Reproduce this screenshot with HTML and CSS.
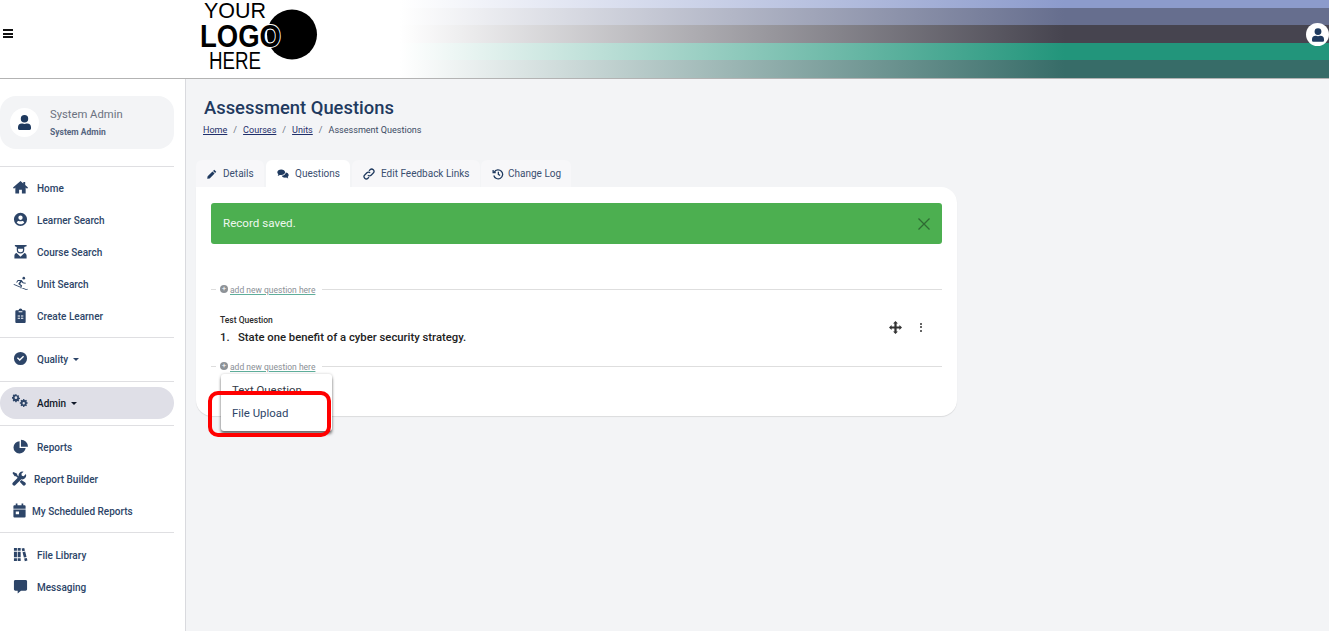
FILE: index.html
```html
<!DOCTYPE html>
<html lang="en">
<head>
<meta charset="utf-8">
<title>Assessment Questions</title>
<link rel="stylesheet" href="styles.css">
</head>
<body>
<header class="topbar">
  <div class="burger"><span></span><span></span><span></span></div>
  <svg class="logo" width="122" height="72" viewBox="0 0 122 72">
    <circle cx="93" cy="33.500" r="25" fill="#000"/>
    <text class="logo-thin" x="5" y="17" textLength="62" lengthAdjust="spacingAndGlyphs" font-size="22">YOUR</text>
    <text class="logo-bold" x="1" y="46" textLength="81" lengthAdjust="spacingAndGlyphs" font-size="32">LOGO</text>
    <text class="logo-thin" x="10" y="68" textLength="52" lengthAdjust="spacingAndGlyphs" font-size="23">HERE</text>
  </svg>
  <div class="stripes">
    <div class="stripe s1"></div>
    <div class="stripe s2"></div>
    <div class="stripe s3"></div>
    <div class="stripe s4"></div>
    <div class="stripe s5"></div>
  </div>
  <div class="top-user">
    <svg width="12" height="14" viewBox="0 0 448 512"><path fill="#1f3a5f" d="M224 256a128 128 0 1 0 0-256 128 128 0 0 0 0 256zm90 32h-17a174 174 0 0 1-146 0h-17A134 134 0 0 0 0 422v42a48 48 0 0 0 48 48h352a48 48 0 0 0 48-48v-42a134 134 0 0 0-134-134z"/></svg>
  </div>
</header>

<div class="page">
  <aside class="sidebar">
    <div class="user-card">
      <div class="avatar">
        <svg width="13" height="15" viewBox="0 0 448 512"><path fill="#1f3a5f" d="M224 256a128 128 0 1 0 0-256 128 128 0 0 0 0 256zm90 32h-17a174 174 0 0 1-146 0h-17A134 134 0 0 0 0 422v42a48 48 0 0 0 48 48h352a48 48 0 0 0 48-48v-42a134 134 0 0 0-134-134z"/></svg>
      </div>
      <div>
        <div class="user-name">System Admin</div>
        <div class="user-role">System Admin</div>
      </div>
    </div>

    <nav class="nav-group first">
      <a class="nav-item"><svg class="ico" viewBox="0 0 16 16"><path d="M8 1 0 8l1 1.200L2.500 8v6.500h4v-4h3v4h4V8L15 9.200 16 8l-3-2.600V2h-2v1.700z"/></svg>Home</a>
      <a class="nav-item"><svg class="ico" viewBox="0 0 16 16"><path fill-rule="evenodd" d="M8 .8a7 7 0 1 0 0 14 7 7 0 0 0 0-14zm0 3a2.300 2.300 0 1 1 0 4.600 2.300 2.300 0 0 1 0-4.600zm0 9.300c-1.700 0-3.200-.8-4-2 .4-1 1.300-1.600 2.200-1.600.6.200 1.200.4 1.800.4s1.200-.2 1.800-.4c.9 0 1.800.6 2.200 1.600-.8 1.200-2.300 2-4 2z"/></svg>Learner Search</a>
      <a class="nav-item"><svg class="ico" viewBox="0 0 16 16"><path fill-rule="evenodd" d="M2 1h12.500v1.300L12 3.300v2.700a4 4 0 0 1-8 0V3.200L2 2.400zM5.300 5v1a2.700 2.700 0 0 0 5.400 0V5zM3.800 9.600 8 13.500l4.200-3.900c1.300.3 2.300 1.500 2.300 3V15.500h-13v-2.900c0-1.500 1-2.700 2.300-3z"/></svg>Course Search</a>
      <a class="nav-item"><svg class="ico" viewBox="0 0 16 16"><circle cx="11.500" cy="2.300" r="1.400"/><path d="M5 4.200h4.200l2 2.600 2.400.5-.2 1-3-.6-1.300-1.300-1.500 2 2.100 1.800-1 3-1-.3.600-2.300-2.700-2 2-3.300H5.500L4.200 7.300l-.8-.6zM.6 9.300l.4-.9 13.300 5.700c.6.200 1-.1 1.300-.6l.4.300c-.4.900-1.200 1.300-2 1z"/></svg>Unit Search</a>
      <a class="nav-item"><svg class="ico" viewBox="0 0 16 16"><path fill-rule="evenodd" d="M3.500 2.500H6a2 2 0 0 1 4 0h2.500c.6 0 1 .4 1 1V15c0 .6-.4 1-1 1h-9c-.6 0-1-.4-1-1V3.500c0-.6.400-1 1-1zM5 8v1h2.500V8zm3.500 0v1H11V8zM5 10.500v1h2.500v-1zm3.500 0v1H11v-1zM6 3.500v1h4v-1z"/></svg>Create Learner</a>
    </nav>
    <nav class="nav-group quality">
      <a class="nav-item"><svg class="ico" viewBox="0 0 16 16"><path fill-rule="evenodd" d="M8 1a7 7 0 1 0 0 14A7 7 0 0 0 8 1zm3.800 5-4.600 4.600-3-3 1-1 2 2 3.600-3.600z"/></svg>Quality<span class="caret"></span></a>
    </nav>
    <nav class="nav-group admin">
      <a class="nav-item active"><svg class="ico cogs" viewBox="0 0 18 16"><path fill-rule="evenodd" d="M5 1h1.600l.3 1.300 1 .5 1.200-.6 1 1.100-.7 1.100.4 1 1.300.4v1.500l-1.300.3-.4 1 .7 1.100-1.100 1-1.100-.7-1 .4-.3 1.300H5l-.3-1.300-1-.4-1.100.7-1.100-1 .7-1.100-.4-1L.5 6.300V4.800l1.300-.4.4-1L1.500 2.300l1.100-1.100 1.100.6 1-.5zM5.800 3.700a1.800 1.800 0 1 0 0 3.600 1.800 1.800 0 0 0 0-3.600z" transform="translate(-.5 -1) scale(.85)"/><path fill-rule="evenodd" d="M12.300 6.500h1.400l.3 1.200 1 .4 1-.6 1 1-.6 1 .4 1 1.200.3v1.400l-1.200.3-.4 1 .6 1-1 1-1-.6-1 .4-.3 1.200h-1.400l-.3-1.200-1-.4-1 .6-1-1 .6-1-.4-1-1.200-.3v-1.400l1.200-.3.4-1-.6-1 1-1 1 .6 1-.4zm.7 3.800a1.500 1.500 0 1 0 0 3 1.500 1.500 0 0 0 0-3z" transform="translate(1.500 -.6) scale(.9)"/></svg>Admin<span class="caret"></span></a>
    </nav>
    <nav class="nav-group">
      <a class="nav-item"><svg class="ico" viewBox="0 0 16 16"><path d="M7 2.500a6.500 6.500 0 1 0 6.500 7.200H7zM8.500.8v7.500H16A7.500 7.500 0 0 0 8.500.8z"/></svg>Reports</a>
      <a class="nav-item tight-a"><svg class="ico" viewBox="0 0 16 16"><path d="M14.800 3.200 12.500 5.500 10.500 5 10 3l2.300-2.300a4.200 4.200 0 0 0-5.100 5.400L1 12.300a1.900 1.900 0 0 0 2.700 2.700l6.200-6.200a4.200 4.200 0 0 0 4.900-5.600zM1.500 1 .5 2l2.300 3.500h1.500l2.400 2.400 1.200-1.200L5.500 4.300V2.800zM10 9.700l-1.800 1.800 3.200 3.500a1.900 1.900 0 0 0 2.700-2.700z"/></svg>Report Builder</a>
      <a class="nav-item tight-b"><svg class="ico" viewBox="0 0 16 16"><path fill-rule="evenodd" d="M4 .5h1.800v2h4.400v-2H12v2h1.500c.6 0 1 .4 1 1V6h-13V3.500c0-.6.400-1 1-1H4zM1.500 7h13v7.500c0 .6-.4 1-1 1h-11c-.6 0-1-.4-1-1zM4 9v3h3.500V9z"/></svg>My Scheduled Reports</a>
    </nav>
    <nav class="nav-group last">
      <a class="nav-item"><svg class="ico" viewBox="0 0 16 16"><path fill-rule="evenodd" d="M1 1h3.200v3H1zm0 4h3.200v6H1zm0 7h3.200v3H1zM5 1h3.200v3H5zm0 4h3.200v6H5zm0 7h3.200v3H5zM9.200 1.600 12 1l.7 2.900-2.800.7zm1 3.900 2.800-.7 1.400 5.800-2.800.7zm1.700 6.800 2.800-.7.700 2.800-2.800.7z"/></svg>File Library</a>
      <a class="nav-item"><svg class="ico" viewBox="0 0 16 16"><path d="M2.500 1h11C14.300 1 15 1.700 15 2.500v8.500c0 .8-.7 1.500-1.500 1.500H8.500L5 15.500v-3H2.500C1.700 12.500 1 11.800 1 11V2.500C1 1.700 1.700 1 2.500 1z"/></svg>Messaging</a>
    </nav>
  </aside>

  <main class="content">
    <h1 class="title">Assessment Questions</h1>
    <div class="crumbs">
      <a>Home</a><span class="sep">/</span><a>Courses</a><span class="sep">/</span><a>Units</a><span class="sep">/</span><span>Assessment Questions</span>
    </div>

    <div class="tabs">
      <div class="tab t1"><svg class="tab-ico" viewBox="0 0 16 16"><path d="M11.500 1.200 14.800 4.500 13 6.300 9.700 3zM8.800 3.900l3.300 3.300-7.800 7.800-4 .7.700-4z"/></svg>Details</div>
      <div class="tab t2 on"><svg class="tab-ico wide" viewBox="0 0 20 16"><path d="M7 .5c3.600 0 6.500 2 6.500 4.600S10.600 9.800 7 9.800c-.8 0-1.500-.1-2.200-.3L1.200 11.300l1-2.800C1 7.600.5 6.400.5 5.100.5 2.500 3.400.5 7 .5z"/><path d="M14.500 5.500c2.900.3 5 2.100 5 4.300 0 1.200-.6 2.300-1.700 3.100l.9 2.600-3.300-1.600c-.6.100-1.200.2-1.900.2-2.600 0-4.900-1.200-5.700-3.200 3.600 0 6.800-2.100 6.700-5.400z"/></svg>Questions</div>
      <div class="tab t3"><svg class="tab-ico wide" viewBox="0 0 16 16" fill="none"><path class="stroke" d="M6.500 9.500a3 3 0 0 0 4.300.1l2.900-2.900a3 3 0 0 0-4.300-4.300L8 3.800M9.500 6.500a3 3 0 0 0-4.300-.1L2.300 9.300a3 3 0 0 0 4.300 4.300L8 12.200"/></svg>Edit Feedback Links</div>
      <div class="tab t4"><svg class="tab-ico wide" viewBox="0 0 16 16" fill="none"><path class="stroke" d="M3 5.500a6 6 0 1 1-.6 4.500M1.500 2.500v3.500H5M8.500 5v3.500l2.300 1.500"/></svg>Change Log</div>
    </div>

    <section class="card">
      <div class="alert">
        <span>Record saved.</span>
        <svg width="14" height="14" viewBox="0 0 14 14"><path d="M1.500 1.500l11 11M12.500 1.500l-11 11" stroke="#2f6a33" stroke-width="1.300" fill="none"/></svg>
      </div>

      <div class="add-row first-add">
        <span class="dash"></span><span class="plus">+</span><a class="add-link">add new question here</a><span class="rule"></span>
      </div>

      <div class="question">
        <div>
          <div class="q-type">Test Question</div>
          <div class="q-text"><b>1.</b><span>State one benefit of a cyber security strategy.</span></div>
        </div>
        <div class="q-actions">
          <svg width="13" height="13" viewBox="0 0 14 14"><path fill="#333" d="M7 0l2.600 2.800H8.200v3h3V4.400L14 7l-2.800 2.600V8.200h-3v3h1.400L7 14l-2.600-2.800h1.400v-3h-3v1.400L0 7l2.800-2.600v1.400h3v-3H4.400z"/></svg>
          <div class="dots"><i></i><i></i><i></i></div>
        </div>
      </div>

      <div class="add-row second-add">
        <span class="dash"></span><span class="plus">+</span><a class="add-link">add new question here</a><span class="rule"></span>
        <div class="menu">
          <div class="menu-item clipped">Text Question</div>
          <div class="menu-item">File Upload</div>
        </div>
        <div class="highlight"></div>
      </div>
    </section>
  </main>
</div>
</body>
</html>
```

FILE: styles.css
```css
* { box-sizing: border-box; }
html, body { margin: 0; height: 100%; }
body {
  font-family: Roboto, "Liberation Sans", sans-serif;
  background: #f3f4f6;
  color: #1f3a5f;
  overflow: hidden;
}

/* top bar */
.topbar {
  position: relative;
  display: flex;
  align-items: stretch;
  height: 79px;
  background: #fff;
  border-bottom: 1px solid #b3b3b3;
}
.burger {
  width: 200px;
  padding: 29px 0 0 3px;
  flex: none;
}
.burger span {
  display: block;
  width: 10px;
  height: 2px;
  margin-bottom: 1.500px;
  background: #111;
}
.logo { flex: none; margin: 1px 0 0 -1px; display: block; height: 72px; overflow: visible; }
.logo text { font-family: "Liberation Sans", sans-serif; fill: #000; }
.logo-thin { font-weight: 400; }
.logo-bold { font-weight: 700; stroke: #fff; stroke-width: 2; paint-order: stroke; }
.stripes {
  flex: 1;
  margin-left: 79px;
  display: flex;
  flex-direction: column;
}
.stripe.s1 { flex: 8; background: linear-gradient(90deg, #fff 0, #8c9bcc 71.500%); }
.stripe.s2 { flex: 17; background: linear-gradient(90deg, #fff 0, #666e8e 71.500%); }
.stripe.s3 { flex: 18; background: linear-gradient(90deg, #fff 0, #46444f 71.500%); }
.stripe.s4 { flex: 17; background: linear-gradient(90deg, #fff 0, #22957b 71.500%); }
.stripe.s5 { flex: 18; background: linear-gradient(90deg, #fff 0, #376c68 71.500%); }
.top-user {
  position: absolute;
  right: 0;
  top: 23px;
  width: 23px;
  height: 23px;
  border-radius: 50%;
  background: #fff;
  display: flex;
  align-items: center;
  justify-content: center;
}

/* page */
.page { display: flex; height: 552px; }

.sidebar {
  width: 186px;
  flex: none;
  padding: 17px 11px 0 0;
  background: #fff;
  border-right: 1px solid #d9dade;
}
.user-card {
  display: flex;
  align-items: center;
  gap: 11px;
  height: 53px;
  padding-left: 10px;
  background: #f3f4f6;
  border-radius: 16px;
}
.avatar {
  width: 29px;
  height: 29px;
  border-radius: 50%;
  background: #fff;
  display: flex;
  align-items: center;
  justify-content: center;
}
.user-name { font-size: 11.250px; line-height: 16px; margin-top: -1px; color: #6b7280; }
.user-role { font-size: 8.500px; line-height: 12px; margin-top: 3px; font-weight: 700; color: #55657f; }

.nav-group {
  padding: 5px 0;
  border-bottom: 1px solid #dfdfe2;
}
.nav-group.first {
  margin-top: 17px;
  border-top: 1px solid #dfdfe2;
}
.nav-group.quality { padding: 5px 0 6px; }
.nav-group.admin { padding: 5px 0 6px; }
.nav-group.last { padding-top: 6px; border-bottom: 0; }
.nav-item {
  display: flex;
  align-items: center;
  height: 32px;
  padding-left: 13px;
  font-size: 10px;
  font-weight: 500;
  color: #2d4568;
}
.nav-item.active {
  background: #dfdfe7;
  border-radius: 16px;
  color: #101828;
}
.ico {
  width: 15px;
  height: 15px;
  flex: none;
  margin-right: 9px;
  margin-top: -2px;
  fill: #2d4568;
}
.ico.cogs { width: 16px; margin-right: 9px; margin-left: -1px; margin-top: -3px; }
.tight-a .ico { margin-left: -1px; margin-right: 7px; }
.tight-b .ico { margin-left: -1px; margin-right: 5px; }
.caret {
  width: 0;
  height: 0;
  margin-left: 5px;
  border-left: 3px solid transparent;
  border-right: 3px solid transparent;
  border-top: 3px solid currentColor;
}

/* main */
.content { flex: 1; min-width: 0; padding: 0 0 0 10px; }
.title {
  margin: 18px 0 0 8px;
  font-size: 18.400px;
  line-height: 22px;
  font-weight: 500;
  color: #1f3a5f;
}
.crumbs {
  display: flex;
  margin: 4px 0 0 7px;
  font-size: 9.050px;
  line-height: 14px;
  color: #3a4a63;
}
.crumbs a { color: #1f2f6a; text-decoration: underline; }
.sep { margin: 0 6px; color: #6b7280; }

.tabs { display: flex; gap: 2px; margin-top: 23px; }
.tab {
  display: flex;
  align-items: center;
  height: 27px;
  padding-left: 11px;
  background: #f7f7f9;
  border-radius: 6px 6px 0 0;
  font-size: 10px;
  color: #3a4f70;
}
.t1 { width: 68px; }
.t2 { width: 84px; background: #fff; }
.t3 { width: 128px; margin-right: -1px; }
.t4 { width: 90px; }
.tab-ico { width: 10px; height: 10px; margin-right: 6px; fill: #1f3a5f; flex: none; }
.tab-ico.wide { width: 12px; height: 12px; margin-right: 6px; }
.t4 .tab-ico { margin-right: 4px; }
.stroke { stroke: #1f3a5f; stroke-width: 1.700; fill: none; }

.card {
  width: 761px;
  height: 229px;
  padding: 16px 15px 0;
  background: #fff;
  border-radius: 0 16px 16px 16px;
  box-shadow: 0 1px 1px rgba(0, 0, 0, .1);
}
.alert {
  display: flex;
  align-items: center;
  justify-content: space-between;
  height: 41px;
  padding: 0 11px 0 12px;
  background: #4caf50;
  border-radius: 3px;
  color: #eef7ee;
  font-size: 11.600px;
}
.alert span { margin-top: -2px; }

.add-row {
  position: relative;
  display: flex;
  align-items: center;
  height: 12px;
  font-size: 8.500px;
  color: #8a8f96;
}
.first-add { margin-top: 39px; }
.dash { width: 5px; height: 1px; background: #ddd; margin-right: 4px; }
.plus {
  width: 8px;
  height: 8px;
  border-radius: 50%;
  background: #8d9297;
  color: #fff;
  font-size: 8px;
  line-height: 8px;
  text-align: center;
  margin-right: 2px;
}
.add-link {
  margin-top: 1px;
  text-decoration: underline;
  text-decoration-color: #5fae9b;
  white-space: nowrap;
}
.rule { flex: 1; height: 1px; background: #dedede; margin-left: 7px; }

.question {
  display: flex;
  justify-content: space-between;
  align-items: center;
  height: 65px;
  padding: 4px 19px 0 9px;
}
.q-type { font-size: 8.500px; line-height: 12px; font-weight: 500; color: #2b2b2b; }
.q-text { display: flex; margin-top: 4px; font-size: 11.300px; line-height: 16px; color: #222; }
.q-text b { width: 18px; font-weight: 500; }
.q-text span { font-weight: 500; }
.q-actions { display: flex; align-items: center; gap: 18px; margin-top: -5px; }
.dots { display: flex; flex-direction: column; gap: 1.500px; width: 3px; }
.dots i { display: block; width: 2px; height: 2px; background: #333; border-radius: 50%; }

.menu {
  position: absolute;
  left: 10px;
  top: 14px;
  width: 111px;
  height: 57px;
  background: #fff;
  border-radius: 3px;
  box-shadow: 0 3px 3px rgba(0, 0, 0, .5), 0 0 3px rgba(0, 0, 0, .2);
  font-size: 11.400px;
  color: #2d4568;
  z-index: 2;
}
.menu-item { height: 38px; padding: 13px 0 0 11px; line-height: 14px; white-space: nowrap; }
.menu-item.clipped { height: 19px; padding-top: 9px; overflow: hidden; color: #333a46; }
.highlight {
  position: absolute;
  left: -3px;
  top: 31px;
  width: 123px;
  height: 46px;
  border: 4px solid #f00;
  border-radius: 10px;
  z-index: 3;
}
```
